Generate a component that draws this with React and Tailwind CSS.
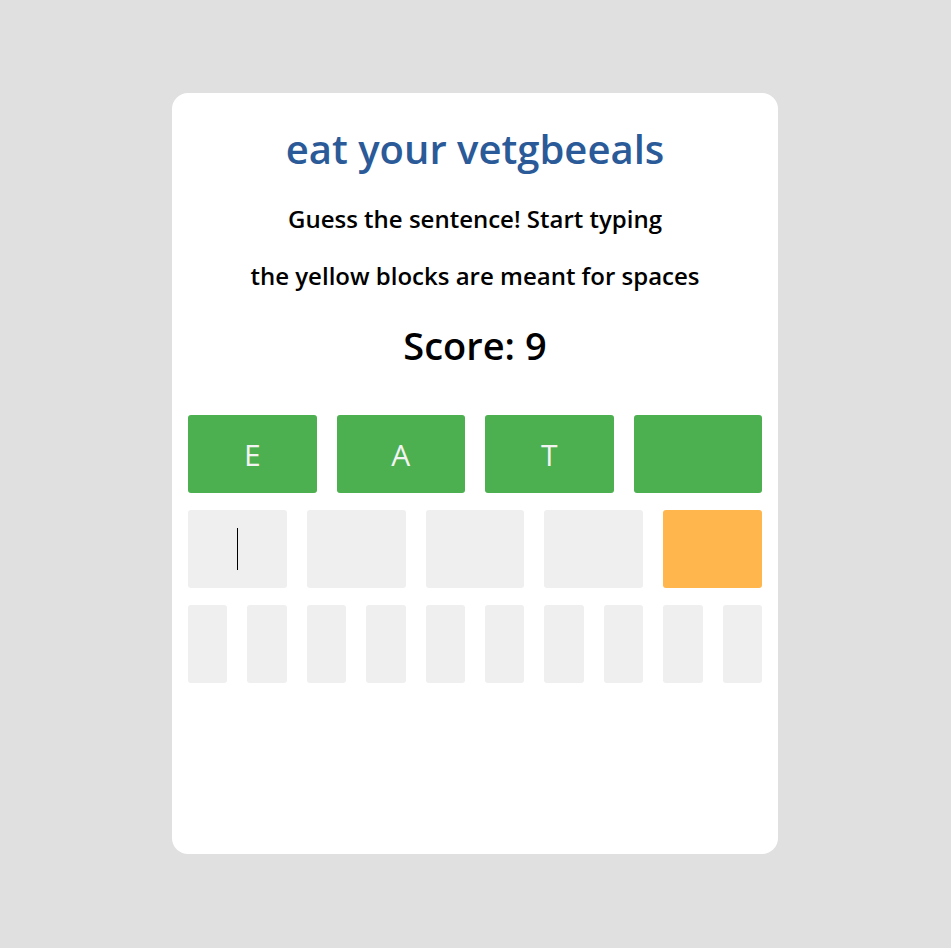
import React from "react";

const rows = [
  { cells: ["E", "A", "T", ""], kind: "done" },
  { cells: ["", "", "", "", ""], kind: "current" },
  { cells: ["", "", "", "", "", "", "", "", "", ""], kind: "empty" },
];

const Block = ({ letter, color, caret }) => (
  <div
    className={`flex-1 h-[78px] rounded-[3px] flex items-center justify-center text-[30px] text-[#f3f3f3] ${color}`}
  >
    {letter}
    {caret && <span className="block w-px h-[42px] bg-black" />}
  </div>
);

export default function App() {
  return (
    <div
      className="min-h-screen bg-[#e0e0e0] pt-[93px] pl-[172px]"
      style={{ fontFamily: "'Open Sans', sans-serif" }}
    >
      <div className="w-[606px] h-[761px] bg-white rounded-[16px] px-4 pt-[29px] flex flex-col items-center">
        <h1 className="text-[40px] leading-[54px] font-semibold text-[#2b5a98]">
          eat your vetgbeeals
        </h1>
        <p className="mt-[27px] text-[24px] leading-[32px] font-semibold text-black">
          Guess the sentence! Start typing
        </p>
        <p className="mt-[25px] text-[24px] leading-[32px] font-semibold text-black">
          the yellow blocks are meant for spaces
        </p>
        <h2 className="mt-[27px] text-[38px] leading-[52px] font-semibold text-black">
          Score: 9
        </h2>

        {/* Board */}
        <div className="mt-[44px] w-full flex flex-col gap-[17px]">
          {rows.map((row, r) => (
            <div key={r} className="flex gap-[20px]">
              {row.cells.map((c, i) => {
                let color = "bg-[#efefef]";
                if (row.kind === "done") color = "bg-[#4caf50]";
                if (row.kind === "current" && i === row.cells.length - 1)
                  color = "bg-[#ffb74d]";
                return (
                  <Block
                    key={i}
                    letter={c}
                    color={color}
                    caret={row.kind === "current" && i === 0}
                  />
                );
              })}
            </div>
          ))}
        </div>
      </div>
    </div>
  );
}
